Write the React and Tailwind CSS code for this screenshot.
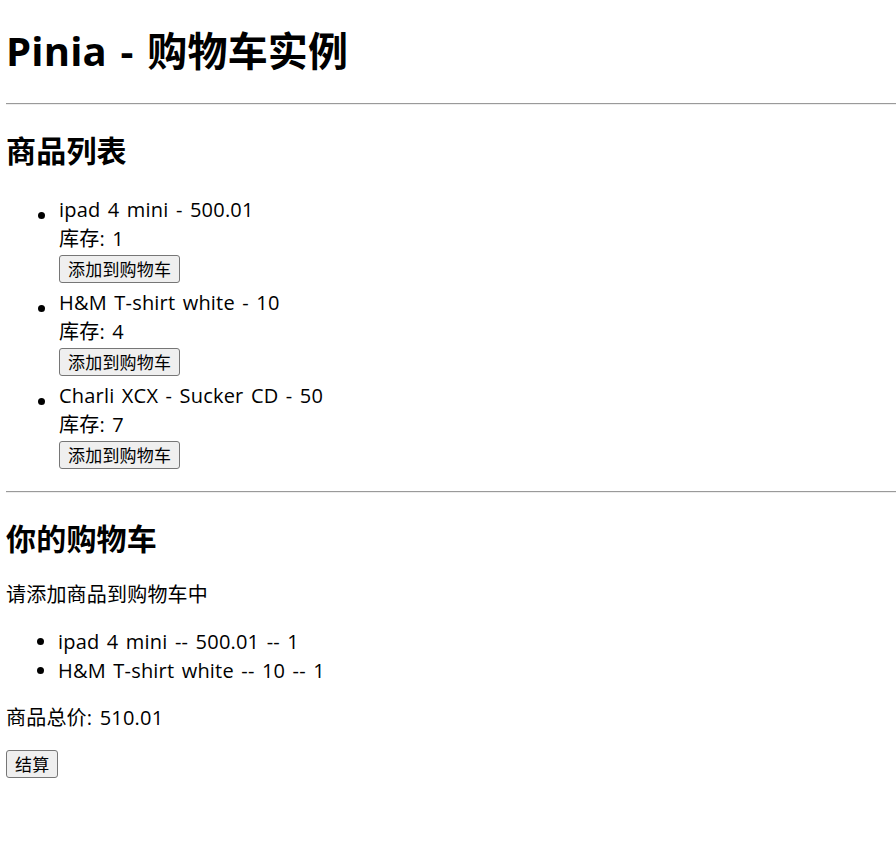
import React from 'react';

const products = [
  { id: 1, title: 'ipad 4 mini', price: 500.01, inventory: 1 },
  { id: 2, title: 'H&M T-shirt white', price: 10, inventory: 4 },
  { id: 3, title: 'Charli XCX - Sucker CD', price: 50, inventory: 7 },
];

const cart = [
  { id: 1, title: 'ipad 4 mini', price: 500.01, quantity: 1 },
  { id: 2, title: 'H&M T-shirt white', price: 10, quantity: 1 },
];

function Button({ children }) {
  return (
    <button className="block h-[28px] px-[8px] text-[17px] leading-none text-black bg-[#efefef] border border-[#767676] rounded-[3px]">
      {children}
    </button>
  );
}

export default function App() {
  return (
    <div
      className="pl-[6px] text-black text-[20px] leading-[29px] bg-white min-h-[861px] [word-spacing:2px] tracking-[0.2px]"
      style={{ fontFamily: '"Open Sans", "Noto Sans CJK SC", sans-serif' }}
    >
      <h1 className="pt-[25px] text-[40px] leading-[52px] font-bold [word-spacing:3px]">Pinia - 购物车实例</h1>

      <hr className="mt-[26px] border-t border-b border-t-[#9a9a9a] border-b-[#eeeeee]" />

      <h2 className="mt-[26px] text-[30px] leading-[40px] font-bold">商品列表</h2>

      {/* product list */}
      <ul className="mt-[24px] pl-[53px]">
        {products.map((p) => (
          <li
            key={p.id}
            className="relative before:content-[''] before:absolute before:left-[-21px] before:top-[17px] before:w-[7px] before:h-[7px] before:rounded-full before:bg-black"
          >
            <div>{p.title} - {p.price}</div>
            <div>库存: {p.inventory}</div>
            <div className="h-[35px] pt-[2px]">
              <Button>添加到购物车</Button>
            </div>
          </li>
        ))}
      </ul>

      <hr className="mt-[17px] border-t border-b border-t-[#9a9a9a] border-b-[#eeeeee]" />

      <h2 className="mt-[26px] text-[30px] leading-[40px] font-bold">你的购物车</h2>
      <p className="mt-[21px]">请添加商品到购物车中</p>

      <ul className="mt-[18px] pl-[52px] list-disc">
        {cart.map((item) => (
          <li key={item.id}>
            {item.title} -- {item.price} -- {item.quantity}
          </li>
        ))}
      </ul>

      <p className="mt-[18px]">商品总价: 510.01</p>

      <div className="mt-[18px]">
        <Button>结算</Button>
      </div>
    </div>
  );
}
